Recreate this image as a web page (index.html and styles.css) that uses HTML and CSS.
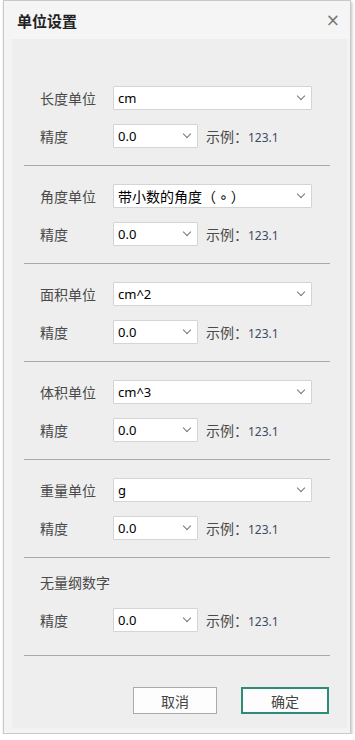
FILE: index.html
```html
<!DOCTYPE html>
<html>
<head>
<meta charset="utf-8">
<title>单位设置</title>
<link rel="stylesheet" href="styles.css">
</head>
<body>
<div class="window">
    <div class="titleBar">
        <span class="title">单位设置</span>
        <span class="close">×</span>
    </div>
    <div class="panel">
        <div class="section first">
            <div class="row">
                <span class="label">长度单位</span>
                <div class="combo wide"><span>cm</span><i class="arrow"></i></div>
            </div>
            <div class="row">
                <span class="label">精度</span>
                <div class="combo narrow"><span>0.0</span><i class="arrow"></i></div>
                <span class="sample">示例：<b>123.1</b></span>
            </div>
        </div>
        <div class="section">
            <div class="row">
                <span class="label">角度单位</span>
                <div class="combo wide"><span class="cjk">带小数的角度（<span class="ring">∘</span>）</span><i class="arrow"></i></div>
            </div>
            <div class="row">
                <span class="label">精度</span>
                <div class="combo narrow"><span>0.0</span><i class="arrow"></i></div>
                <span class="sample">示例：<b>123.1</b></span>
            </div>
        </div>
        <div class="section">
            <div class="row">
                <span class="label">面积单位</span>
                <div class="combo wide"><span>cm^2</span><i class="arrow"></i></div>
            </div>
            <div class="row">
                <span class="label">精度</span>
                <div class="combo narrow"><span>0.0</span><i class="arrow"></i></div>
                <span class="sample">示例：<b>123.1</b></span>
            </div>
        </div>
        <div class="section">
            <div class="row">
                <span class="label">体积单位</span>
                <div class="combo wide"><span>cm^3</span><i class="arrow"></i></div>
            </div>
            <div class="row">
                <span class="label">精度</span>
                <div class="combo narrow"><span>0.0</span><i class="arrow"></i></div>
                <span class="sample">示例：<b>123.1</b></span>
            </div>
        </div>
        <div class="section">
            <div class="row">
                <span class="label">重量单位</span>
                <div class="combo wide"><span>g</span><i class="arrow"></i></div>
            </div>
            <div class="row">
                <span class="label">精度</span>
                <div class="combo narrow"><span>0.0</span><i class="arrow"></i></div>
                <span class="sample">示例：<b>123.1</b></span>
            </div>
        </div>
        <div class="section last">
            <div class="row">
                <span class="label">无量纲数字</span>
            </div>
            <div class="row">
                <span class="label">精度</span>
                <div class="combo narrow"><span>0.0</span><i class="arrow"></i></div>
                <span class="sample">示例：<b>123.1</b></span>
            </div>
        </div>
        <div class="buttons">
            <button type="button" class="btn cancel">取消</button>
            <button type="button" class="btn ok">确定</button>
        </div>
    </div>
</div>
</body>
</html>
```

FILE: styles.css
```css
body {margin: 0;
      background: #ffffff;
      font-family: "Noto Sans CJK SC", sans-serif;
      color: #444444}
.window {width: 346px;
         height: 732px;
         margin-left: 3px;
         border: 1px solid #c9c9c9;
         background: #f3f3f3;
         box-shadow: 1px 2px 3px rgba(0,0,0,0.25)}
.titleBar {height: 38px;
           background: #f5f5f5;
           display: flex;
           align-items: center;
           justify-content: space-between;
           padding: 0 10px 0 13px}
.title {font-size: 15px;
        font-weight: bold;
        color: #222222}
.close {font-family: "DejaVu Sans", sans-serif;
        font-size: 17px;
        color: #777777}
.panel {margin: 0 3px 0 8px;
        height: 689px;
        background: #eeeeee;
        padding: 0 17px 0 12px}
.section {display: flex;
          flex-direction: column;
          gap: 14px;
          padding: 18px 0 17px 16px;
          border-bottom: 1px solid #a8a8a8}
.section.first {padding-top: 47px}
.section.last {padding-top: 12px;
               padding-bottom: 23px}
.row {display: flex;
      align-items: center;
      height: 24px}
.label {width: 73px;
        font-size: 14px;
        color: #4a4a4a}
.combo {height: 22px;
        background: #ffffff;
        border: 1px solid #d4d4d4;
        border-radius: 1px;
        display: flex;
        align-items: center;
        justify-content: space-between;
        padding: 0 7px 0 4px;
        font-family: "Noto Sans", sans-serif;
        font-size: 13px;
        color: #000000}
.combo .cjk {font-family: "Noto Sans CJK SC", sans-serif;
             font-size: 14px}
.ring {font-family: "DejaVu Sans", sans-serif;
       padding: 0 3px}
.wide {width: 186px}
.narrow {width: 72px}
.arrow {width: 5px;
        height: 5px;
        border-right: 1px solid #777777;
        border-bottom: 1px solid #777777;
        transform: rotate(45deg);
        margin-top: -4px}
.sample {margin-left: 8px;
         font-size: 14px;
         color: #4a4a4a}
.sample b {font-family: "Noto Sans", sans-serif;
           font-weight: normal;
           font-size: 12px;
           color: #3d4a66}
.buttons {display: flex;
          justify-content: flex-end;
          gap: 24px;
          padding: 31px 1px 0 0}
.btn {height: 27px;
      font-family: "Noto Sans CJK SC", sans-serif;
      font-size: 14px;
      color: #444444;
      background: #fdfdfd}
.cancel {width: 84px;
         border: 1px solid #ababab}
.ok {width: 88px;
     border: 2px solid #2e8b7a}
```
